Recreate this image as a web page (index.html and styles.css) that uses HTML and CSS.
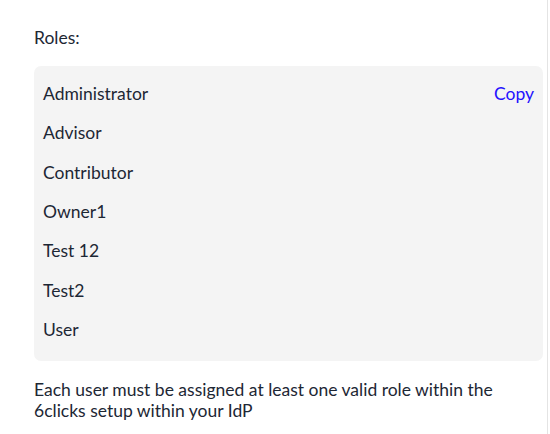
FILE: index.html
```html
<!DOCTYPE html>
<html>
<head>
<meta charset="utf-8">
<link rel="stylesheet" href="styles.css">
</head>
<body>
<div class="panel">
  <div class="content">
    <p class="label">Roles:</p>
    <div class="roles">
      <div class="role"><span>Administrator</span><a class="copy" href="#">Copy</a></div>
      <div class="role"><span>Advisor</span></div>
      <div class="role"><span>Contributor</span></div>
      <div class="role"><span>Owner1</span></div>
      <div class="role"><span>Test 12</span></div>
      <div class="role"><span>Test2</span></div>
      <div class="role"><span>User</span></div>
    </div>
    <p class="note">Each user must be assigned at least one valid role within the 6clicks setup within your IdP</p>
  </div>
</div>
</body>
</html>
```
FILE: styles.css
```css
html, body {
  margin: 0;
  padding: 0;
  background: #fff;
}
body {
  font-family: Lato, "Noto Sans", sans-serif;
  color: #1d2734;
  font-size: 17.5px;
}
.panel {
  width: 548px;
  height: 434px;
  border-right: 1px solid #e4e4e4;
  box-sizing: border-box;
}
.content {
  width: 509px;
  padding: 27px 0 0 34px;
}
.label {
  margin: 0;
  line-height: 21px;
}
.roles {
  margin-top: 18px;
  background: #f4f4f4;
  border-radius: 7px;
  padding: 8px 9px 11.5px 9px;
}
.role {
  display: flex;
  justify-content: space-between;
  align-items: center;
  padding: 9px 0;
  line-height: 21.33px;
}
.copy {
  color: #2411ff;
  text-decoration: none;
}
.note {
  margin: 18px 0 0 0;
  line-height: 21px;
}
```
